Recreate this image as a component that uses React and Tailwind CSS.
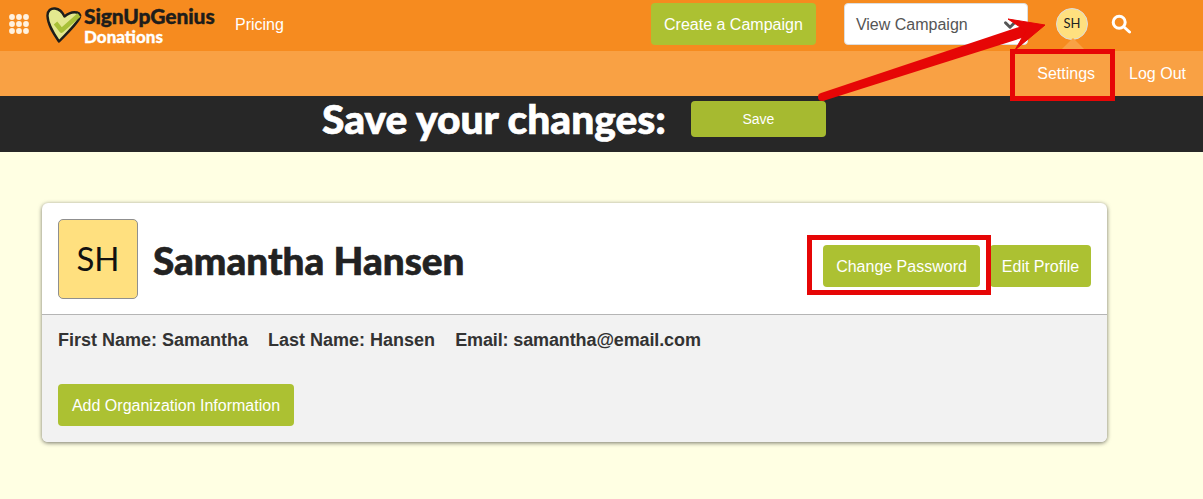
import React from 'react';
import { ChevronDown } from 'lucide-react';

const sans = "font-['Liberation_Sans',Arial,sans-serif]";
const lato = "font-['Lato',sans-serif]";

const GridIcon = () => (
    <svg width="20" height="20" viewBox="0 0 20 20" fill="#fff2e0">
        {[3, 10, 17].map(cy => [3, 10, 17].map(cx => <circle key={`${cx}-${cy}`} cx={cx} cy={cy} r="2.9" />))}
    </svg>
);

const HeartLogo = () => (
    <svg width="36" height="36" viewBox="0 0 36 36">
        <path d="M13 34.500C8 27 1.800 18 1.500 9C1.300 3.500 5 1 9 1.500C13 2 16.500 5 18.500 9.500C22 6.500 27 4.500 31 5.500C34.500 6.500 35 9 33 12C28 20 19 28 13 34.500Z" fill="#e3e88f" stroke="#1d1d1b" strokeWidth="2.400" strokeLinejoin="round" />
        <path d="M9.500 16L15.500 23.500L33 8" fill="none" stroke="#a8c038" strokeWidth="4.500" strokeLinejoin="round" />
    </svg>
);

const SearchIcon = () => (
    <svg width="20" height="20" viewBox="0 0 20 20" fill="none" stroke="#fff" strokeWidth="3" strokeLinecap="round">
        <circle cx="8.200" cy="8.200" r="6" />
        <path d="M13 13L18.500 18" />
    </svg>
);

const GreenButton = ({ className = '', children }) => (
    <button className={`bg-[#acc132] text-white rounded-[4px] text-base pt-[2px] flex items-center justify-center ${className}`}>{children}</button>
);

// kırmızı ok ve kutular - ekran görüntüsü üzerindeki işaretler
const Annotations = () => (
    <>
        <div className="absolute left-[1010px] top-[49px] w-[105px] h-[52px] border-[5px] border-[#e60606]" />
        <div className="absolute left-[807px] top-[235px] w-[184px] h-[60px] border-[5px] border-[#e60606]" />
        <svg className="absolute left-0 top-0 pointer-events-none" width="1203" height="499">
            <circle cx="822" cy="97" r="4" fill="#e60606" />
            <path d="M821 93L1028 24L1031 35L823 101Z" fill="#e60606" />
            <path d="M1008 19L1045 25L1015 50L1026 31Z" fill="#e60606" stroke="#e60606" strokeWidth="1" strokeLinejoin="round" />
        </svg>
    </>
);

export default function App() {
    return (
        <div className={`relative w-[1203px] h-[499px] overflow-hidden bg-[#ffffe3] ${sans}`}>
            <header className="relative h-[51px] bg-[#f68b1f] flex items-center pl-[9px] pb-[3px]">
                <GridIcon />
                <div className="ml-[17px] flex items-center w-[189px] mt-[2px]">
                    <HeartLogo />
                    <div className={`${lato} font-black ml-[2px]`}>
                        <div className="text-[21px] leading-[20px] mb-[2px] text-[#1d1d1b] tracking-[-0.1px] [-webkit-text-stroke:0.4px_#1d1d1b]">SignUpGenius</div>
                        <div className="text-[17px] leading-[17px] text-white [-webkit-text-stroke:0.3px_#fff]">Donations</div>
                    </div>
                </div>
                <span className="text-white text-base pt-[2px]">Pricing</span>
                <GreenButton className="ml-[367px] w-[165px] h-[42px]">Create a Campaign</GreenButton>
                <div className="ml-[28px] w-[184px] h-[42px] bg-white rounded-[4px] border border-[#ddd] flex items-center justify-between pl-[11px] pr-[8px] pt-[2px] text-[#555] text-base">
                    View Campaign
                    <ChevronDown size={18} strokeWidth={4} className="text-[#555]" />
                </div>
                <div className={`ml-[28px] w-[32px] h-[32px] rounded-full bg-[#ffe07f] border border-[#ddd] flex items-center justify-center text-[13px] text-[#222] ${lato}`}>SH</div>
                <div className="ml-[23px]"><SearchIcon /></div>
                <div className="absolute left-[1060px] top-[38px] w-0 h-0 border-x-[13px] border-x-transparent border-b-[13px] border-b-[#f9a144]" />
            </header>
            <nav className="h-[45px] bg-[#f9a144] flex items-center justify-end text-white text-base pr-[17px] gap-[34px]">
                <span>Settings</span>
                <span>Log Out</span>
            </nav>
            <div className="h-[56px] bg-[#272727] flex items-start pl-[322px]">
                <span className={`${lato} font-black text-[40.700px] leading-[46px] text-white [-webkit-text-stroke:0.7px_#fff]`}>Save your changes:</span>
                <button className="ml-[25px] mt-[5px] w-[135px] h-[36px] bg-[#a6ba30] text-white text-sm rounded-[4px]">Save</button>
            </div>
            <main className="pt-[51px] pl-[42px]">
                <section className="w-[1065px] h-[239px] rounded-[6px] bg-white overflow-hidden shadow-[0_1px_4px_rgba(0,0,0,0.55)]">
                    <div className="h-[112px] border-b border-[#b5b5b5] flex items-center pl-[16px] pr-[16px]">
                        <div className={`w-[80px] h-[80px] bg-[#ffe07f] border border-[#8f8f8f] rounded-[5px] flex items-center justify-center text-[33px] text-[#111] ${lato}`}>SH</div>
                        <h1 className={`ml-[15px] ${lato} font-black text-[38.700px] text-[#222] leading-none mt-[4px] [-webkit-text-stroke:0.6px_#222]`}>Samantha Hansen</h1>
                        <div className="ml-auto flex gap-[10px] mt-[14px]">
                            <GreenButton className="w-[157px] h-[42px]">Change Password</GreenButton>
                            <GreenButton className="w-[101px] h-[42px]">Edit Profile</GreenButton>
                        </div>
                    </div>
                    <div className="h-[127px] bg-[#f2f2f2] pl-[16px] pt-[15px]">
                        <div className="flex gap-[20px] font-bold text-[#333] text-[18px] leading-[20px]">
                            <span>First Name: Samantha</span>
                            <span>Last Name: Hansen</span>
                            <span className="tracking-[-0.12px]">Email: samantha@email.com</span>
                        </div>
                        <GreenButton className="mt-[34px] w-[236px] h-[42px]">Add Organization Information</GreenButton>
                    </div>
                </section>
            </main>
            <Annotations />
        </div>
    );
}
